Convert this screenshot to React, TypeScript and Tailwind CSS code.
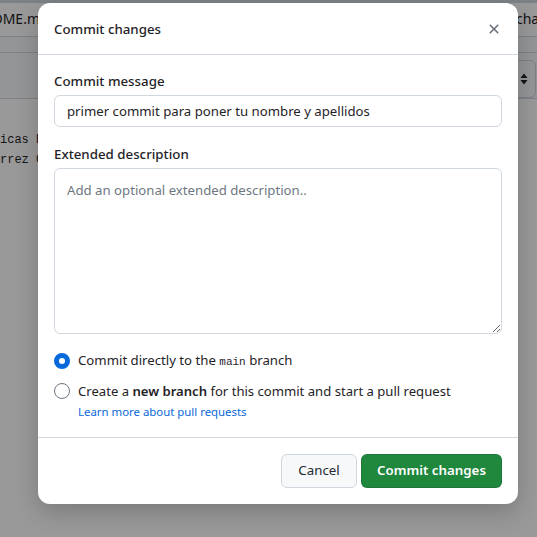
import React from "react";

function XIcon() {
  return (
    <svg width="16" height="16" viewBox="0 0 16 16" fill="currentColor" aria-hidden="true">
      <path d="M3.72 3.72a.75.75 0 0 1 1.06 0L8 6.94l3.22-3.22a.749.749 0 0 1 1.275.326.749.749 0 0 1-.215.734L9.06 8l3.22 3.22a.749.749 0 0 1-.326 1.275.749.749 0 0 1-.734-.215L8 9.06l-3.22 3.22a.751.751 0 0 1-1.042-.018.751.751 0 0 1-.018-1.042L6.94 8 3.72 4.78a.75.75 0 0 1 0-1.06Z" />
    </svg>
  );
}

function UpDown() {
  return (
    <svg width="8" height="12" viewBox="0 0 8 12" fill="currentColor" aria-hidden="true">
      <path d="M4 0.5 7.5 5H0.5Z" />
      <path d="M4 11.5 0.5 7H7.5Z" />
    </svg>
  );
}

export default function App() {
  return (
    <div className="relative h-[537px] w-[537px] overflow-hidden bg-white font-['Noto_Sans',sans-serif] text-[#1f2328]">
      {/* background page */}
      <div className="flex flex-col">
        <div className="h-[3px] bg-[#d0d7de]" />
        <div className="flex h-[34px] items-center justify-between border-b border-[#d0d7de] pb-[2px]">
          <span className="-ml-[33px] text-[14px] whitespace-nowrap">README.md</span>
          <span className="-mr-[34px] text-[14px] whitespace-nowrap">changes</span>
        </div>
        <div className="h-[16px] border-b border-[#d0d7de] bg-[#f6f8fa]" />
        <div className="flex h-[46px] justify-end border-b border-[#d0d7de] bg-[#f6f8fa] pt-[7px]">
          <div className="mr-[1px] flex h-[38px] w-[40px] items-center justify-end rounded-md border border-[#d0d7de] bg-[#f6f8fa] pr-[7px] text-[#1f2328]">
            <UpDown />
          </div>
        </div>
        <div className="flex flex-col pt-[31px] font-['Liberation_Mono',monospace] text-[12px] leading-[20px] whitespace-nowrap">
          <span>icas Estadística</span>
          <span>rrez García</span>
        </div>
      </div>

      {/* overlay */}
      <div className="absolute inset-0 bg-black/40" />

      {/* dialog */}
      <div className="absolute left-[38px] top-[3px] flex w-[480px] flex-col rounded-xl bg-white shadow-[0_8px_24px_rgba(0,0,0,0.2)]">
        <div className="flex h-[52px] items-center justify-between border-b border-[#d0d7de] pl-4 pr-2">
          <h1 className="text-[13.3px] font-medium leading-5">Commit changes</h1>
          <button className="flex h-8 w-8 items-center justify-center rounded-md text-[#656d76]">
            <XIcon />
          </button>
        </div>

        <div className="flex flex-col px-4 pt-4 pb-[15px]">
          <label className="text-[13.3px] font-medium leading-5">Commit message</label>
          <input
            className="mt-1 h-8 rounded-md border border-[#d0d7de] px-3 text-[13.2px] text-[#1f2328] outline-none"
            defaultValue="primer commit para poner tu nombre y apellidos"
          />
          <label className="mt-[17px] text-[13.3px] font-medium leading-5">Extended description</label>
          <textarea
            className="mt-1 h-[166px] rounded-md border border-[#d0d7de] px-3 py-[11px] text-[13.2px] leading-5 text-[#1f2328] outline-none placeholder:text-[#6e7781]"
            placeholder="Add an optional extended description.."
          />
          <div className="mt-[17px] flex h-5 items-center gap-2">
            <span className="box-border h-4 w-4 shrink-0 rounded-full border-[5px] border-[#0969da] bg-white" />
            <span className="text-[13.2px] leading-5">
              Commit directly to the{" "}
              <span className="font-['Liberation_Mono',monospace] text-[11px]">main</span> branch
            </span>
          </div>
          <div className="mt-[10px] flex h-5 items-center gap-2">
            <span className="box-border h-4 w-4 shrink-0 rounded-full border border-[#6e7781] bg-white" />
            <span className="text-[13.1px] leading-5">
              Create a <span className="font-semibold">new branch</span> for this commit and start a pull request
            </span>
          </div>
          <div className="mt-[1px] pl-6 text-[11.4px] leading-[20px] text-[#0969da]">Learn more about pull requests</div>
        </div>

        <div className="flex justify-end gap-1 border-t border-[#d0d7de] px-4 pt-4 pb-4">
          <button className="flex h-[34px] w-[76px] items-center justify-center rounded-md border border-[#d0d7de] bg-[#f6f8fa] text-[13.3px] font-normal text-[#24292f]">
            Cancel
          </button>
          <button className="flex h-[34px] w-[141px] items-center justify-center rounded-md border border-[rgba(31,35,40,0.15)] bg-[#1f883d] text-[13.3px] font-semibold text-white">
            Commit changes
          </button>
        </div>
      </div>
    </div>
  );
}
